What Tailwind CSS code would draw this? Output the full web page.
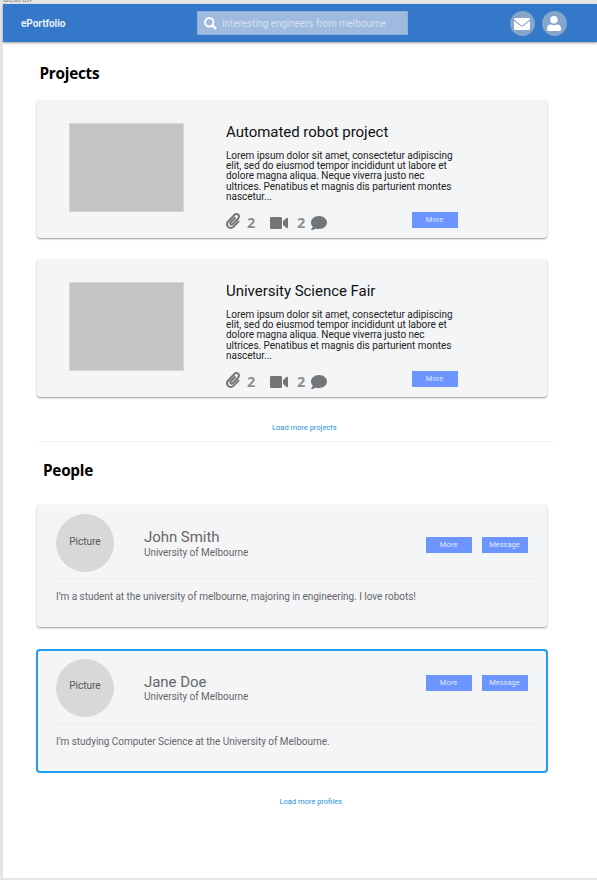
<!DOCTYPE html>
<html lang="en">
<head>
<meta charset="utf-8">
<title>ePortfolio</title>
<script src="https://cdn.jsdelivr.net/npm/@tailwindcss/browser@4"></script>
</head>
<body class="w-[597px] h-[880px] overflow-hidden bg-[#e5e5e5] font-['Roboto',sans-serif]">
<svg class="hidden">
  <symbol id="clip" viewBox="0 0 448 512"><path fill="currentColor" d="M43.246 466.142c-58.43-60.289-57.341-157.511 1.386-217.581L254.392 34c44.316-45.332 116.351-45.336 160.671 0 43.89 44.894 43.943 117.329 0 162.276L232.214 383.128c-29.855 30.537-78.633 30.111-107.982-.998-28.275-29.97-27.368-77.473 1.452-106.953l143.743-146.835c6.182-6.314 16.312-6.422 22.626-.241l22.861 22.379c6.315 6.182 6.422 16.312.241 22.626L171.427 319.927c-4.932 5.045-5.236 13.428-.648 18.292 4.372 4.634 11.245 4.711 15.688.165l182.849-186.851c19.613-20.062 19.613-52.725-.011-72.798-19.189-19.627-49.957-19.637-69.154 0L90.39 293.295c-34.763 35.56-35.299 93.12-1.191 128.313 34.01 35.093 88.985 35.137 123.058.286l172.06-175.999c6.177-6.319 16.307-6.433 22.626-.256l22.877 22.364c6.319 6.177 6.434 16.307.256 22.626l-172.06 175.998c-59.576 60.938-155.943 60.216-214.77-.485z"/></symbol>
  <symbol id="video" viewBox="0 0 18 12"><path fill="currentColor" d="M1.200 0h9.600Q12 0 12 1.200v9.600Q12 12 10.800 12H1.200Q0 12 0 10.800V1.200Q0 0 1.200 0zM13 4l3.500-2.900Q18 .3 18 1.700v8.600q0 1.400-1.500.6L13 8z"/></symbol>
  <symbol id="comment" viewBox="0 0 512 448"><path fill="currentColor" d="M256 0C114.600 0 0 93.100 0 208c0 49.600 21.400 95 57 130.700C44.500 389.100 2.700 434 2.200 434.500c-2.200 2.300-2.800 5.700-1.500 8.700S4.800 448 8 448c66.300 0 116-31.800 140.600-51.400 32.700 12.300 69 19.400 107.400 19.400 141.400 0 256-93.100 256-208S397.400 0 256 0z"/></symbol>
</svg>

<div class="h-1 overflow-hidden flex items-end pl-[3px]"><span class="text-[9px] leading-[10px] text-[#888] tracking-wide">Search</span></div>
<div class="ml-[2.5px] h-[874px] bg-white">
  <header class="h-[38px] bg-[#3578ca] shadow-[0_1px_2px_rgba(0,0,0,0.4)] flex items-center pl-[18.500px] pr-[30.500px]">
    <h1 class="w-[175.500px] text-[10px] tracking-[-0.05px] font-bold text-[#eaf1fa]">ePortfolio</h1>
    <div class="w-[211.500px] h-[23.500px] bg-[#9fb9df] border border-[#8bafe0] flex items-center pl-[6px]">
      <svg class="w-[13px] h-[13px] text-white" viewBox="0 0 13 13" fill="none" stroke="currentColor"><circle cx="5.300" cy="5.300" r="4.200" stroke-width="2"/><path d="M8.500 8.500l3.600 3.600" stroke-width="2.300"/></svg>
      <span class="ml-[5.500px] text-[10px] tracking-[-0.1px] text-[#d3dff2] whitespace-nowrap">Interesting engineers from melbourne</span>
    </div>
    <div class="ml-auto flex gap-[7px]">
      <span class="size-[25px] rounded-full bg-[#86a5cd] flex items-center justify-center">
        <svg class="w-[16px] h-[12px] mt-px" viewBox="0 0 16 12"><path fill="#fff" d="M1.500 0h13Q16 0 16 1.500L9 6.900Q8 7.600 7 6.900L0 1.500Q0 0 1.500 0zM0 3l6.300 4.800Q8 9 9.700 7.800L16 3v7.500q0 1.500-1.500 1.500h-13Q0 12 0 10.500z"/></svg>
      </span>
      <span class="size-[25px] rounded-full bg-[#86a5cd] flex items-center justify-center">
        <svg class="w-[14px] h-[15px]" viewBox="0 0 14 15"><circle cx="7" cy="3.700" r="3.700" fill="#fff"/><path fill="#fff" d="M4 8.500Q7 9.800 10 8.500 14 8.500 14 12.500v1q0 1.500-1.500 1.500h-11Q0 15 0 13.500v-1Q0 8.500 4 8.500z"/></svg>
      </span>
    </div>
  </header>

  <main class="pl-[34.500px]">
    <h2 class="h-[58px] pt-[21px] pl-[2.500px] text-[15.300px] tracking-[-0.25px] leading-[20px] font-bold text-black font-['Open_Sans']">Projects</h2>

    <article class="w-[510px] h-[137.500px] rounded-[3px] bg-[#f4f5f7] shadow-[0_1px_2px_rgba(0,0,0,0.4)] flex pl-[32px]">
      <div class="mt-[23px] w-[114.500px] h-[89px] bg-[#c4c4c4] border border-[#d5d6d7]"></div>
      <div class="ml-[42.500px] w-[231.500px] pt-[22px]">
        <h3 class="text-[15px] tracking-[-0.03px] leading-[20px] text-[#111]">Automated robot project</h3>
        <p class="mt-[8.500px] text-[10px] tracking-[-0.025px] leading-[10.400px] text-[#222] whitespace-nowrap">Lorem ipsum dolor sit amet, consectetur adipiscing<br>elit, sed do eiusmod tempor incididunt ut labore et<br>dolore magna aliqua. Neque viverra justo nec<br>ultrices. Penatibus et magnis dis parturient montes<br>nascetur...</p>
        <div class="mt-[10.500px] h-[20px] flex items-center text-[#747577] font-['Open_Sans'] font-bold text-[14.500px] leading-[20px]">
          <svg class="w-[14px] h-[16px] -mt-1"><use href="#clip"/></svg>
          <span class="ml-[7px] w-[9px] text-[#8f8f8f]">2</span>
          <svg class="ml-[14px] w-[18px] h-[12px]"><use href="#video"/></svg>
          <span class="ml-[9px] w-[9px] text-[#8f8f8f]">2</span>
          <svg class="ml-[5px] w-[16px] h-[14px]"><use href="#comment"/></svg>
          <button class="ml-auto -mt-[6px] w-[46px] h-[16px] bg-[#6d95ff] font-['Roboto'] font-normal text-[7.500px] leading-[16px] text-[#dfe8ff]">More</button>
        </div>
      </div>
    </article>

    <article class="mt-[21.500px] w-[510px] h-[137.500px] rounded-[3px] bg-[#f4f5f7] shadow-[0_1px_2px_rgba(0,0,0,0.4)] flex pl-[32px]">
      <div class="mt-[23px] w-[114.500px] h-[89px] bg-[#c4c4c4] border border-[#d5d6d7]"></div>
      <div class="ml-[42.500px] w-[231.500px] pt-[22px]">
        <h3 class="text-[15px] tracking-[-0.03px] leading-[20px] text-[#111]">University Science Fair</h3>
        <p class="mt-[8.500px] text-[10px] tracking-[-0.025px] leading-[10.400px] text-[#222] whitespace-nowrap">Lorem ipsum dolor sit amet, consectetur adipiscing<br>elit, sed do eiusmod tempor incididunt ut labore et<br>dolore magna aliqua. Neque viverra justo nec<br>ultrices. Penatibus et magnis dis parturient montes<br>nascetur...</p>
        <div class="mt-[10.500px] h-[20px] flex items-center text-[#747577] font-['Open_Sans'] font-bold text-[14.500px] leading-[20px]">
          <svg class="w-[14px] h-[16px] -mt-1"><use href="#clip"/></svg>
          <span class="ml-[7px] w-[9px] text-[#8f8f8f]">2</span>
          <svg class="ml-[14px] w-[18px] h-[12px]"><use href="#video"/></svg>
          <span class="ml-[9px] w-[9px] text-[#8f8f8f]">2</span>
          <svg class="ml-[5px] w-[16px] h-[14px]"><use href="#comment"/></svg>
          <button class="ml-auto -mt-[6px] w-[46px] h-[16px] bg-[#6d95ff] font-['Roboto'] font-normal text-[7.500px] leading-[16px] text-[#dfe8ff]">More</button>
        </div>
      </div>
    </article>

    <div class="w-[517px] h-[45.500px] border-b border-[#f2f2f2] pt-[26px] pl-[235px] text-[7.500px] leading-[10px] text-[#2491e3]"><a>Load more projects</a></div>

    <h2 class="h-[63px] pt-[18px] pl-[6px] text-[15.300px] tracking-[-0.25px] leading-[20px] font-bold text-black font-['Open_Sans']">People</h2>

    <article class="w-[510px] h-[122px] rounded-[3px] bg-[#f4f5f7] shadow-[0_1px_2px_rgba(0,0,0,0.4)] pl-[19px] pr-[12px] text-[#666769]">
      <div class="h-[74px] border-b border-[#ebecee] flex pt-[9px]">
        <div class="size-[58px] rounded-full bg-[#d8d8d8] text-[10px] leading-[55px] text-center text-[#555]">Picture</div>
        <div class="ml-[30px] pt-[13px]">
          <h3 class="text-[15px] tracking-[-0.05px] leading-[20px]">John Smith</h3>
          <p class="text-[10px] tracking-[-0.04px] leading-[11px]">University of Melbourne</p>
        </div>
        <div class="ml-auto mr-[7.500px] mt-[22.500px] flex gap-[10px] text-[7.500px] leading-[16px] text-center text-[#dfe8ff]">
          <button class="w-[46px] h-[16px] bg-[#6d95ff]">More</button>
          <button class="w-[46px] h-[16px] bg-[#6d95ff]">Message</button>
        </div>
      </div>
      <p class="mt-[11px] text-[10px] tracking-[-0.035px] leading-[14px]">I’m a student at the university of melbourne, majoring in engineering. I love robots!</p>
    </article>

    <article class="mt-[22.500px] w-[510px] h-[122px] rounded-[3px] bg-[#f4f5f7] outline-2 -outline-offset-1 outline-[#1f9cf0] pl-[19px] pr-[12px] text-[#666769]">
      <div class="h-[74px] border-b border-[#ebecee] flex pt-[9px]">
        <div class="size-[58px] rounded-full bg-[#d8d8d8] text-[10px] leading-[54px] text-center text-[#555]">Picture</div>
        <div class="ml-[30px] pt-[13px]">
          <h3 class="text-[15px] tracking-[-0.05px] leading-[20px]">Jane Doe</h3>
          <p class="text-[10px] tracking-[-0.04px] leading-[10px]">University of Melbourne</p>
        </div>
        <div class="ml-auto mr-[7.500px] mt-[16px] flex gap-[10px] text-[7.500px] leading-[16px] text-center text-[#dfe8ff]">
          <button class="w-[46px] h-[16px] bg-[#6d95ff]">More</button>
          <button class="w-[46px] h-[16px] bg-[#6d95ff]">Message</button>
        </div>
      </div>
      <p class="mt-[11px] text-[10px] tracking-[-0.035px] leading-[14px]">I’m studying Computer Science at the University of Melbourne.</p>
    </article>

    <div class="pt-[25px] pl-[242.500px] text-[7.500px] leading-[10px] text-[#2491e3]"><a>Load more profiles</a></div>
  </main>
</div>
</body>
</html>
